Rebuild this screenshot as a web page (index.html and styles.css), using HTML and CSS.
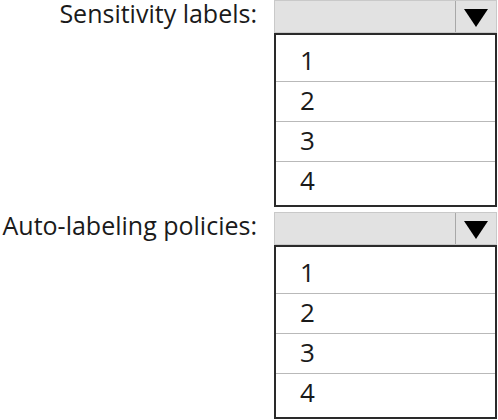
FILE: index.html
```html
<!DOCTYPE html>
<html>
<head>
<meta charset="utf-8">
<link rel="stylesheet" href="styles.css">
</head>
<body>
<div class="form">
  <div class="label">Sensitivity labels:</div>
  <div class="field">
    <div class="combo">
      <div class="combo-value"></div>
      <div class="combo-btn">
        <svg width="24" height="18" viewBox="0 0 24 18"><polygon points="0,0 24,0 12,18" fill="#000"/></svg>
      </div>
    </div>
    <ul class="list">
      <li>1</li>
      <li>2</li>
      <li>3</li>
      <li>4</li>
    </ul>
  </div>

  <div class="label">Auto-labeling policies:</div>
  <div class="field">
    <div class="combo">
      <div class="combo-value"></div>
      <div class="combo-btn">
        <svg width="24" height="18" viewBox="0 0 24 18"><polygon points="0,0 24,0 12,18" fill="#000"/></svg>
      </div>
    </div>
    <ul class="list">
      <li>1</li>
      <li>2</li>
      <li>3</li>
      <li>4</li>
    </ul>
  </div>
</div>
</body>
</html>
```

FILE: styles.css
```css
html, body {
  margin: 0;
  padding: 0;
  background: #ffffff;
}

body {
  font-family: "Open Sans", "Noto Sans", sans-serif;
  color: #1a1a1a;
}

.form {
  display: grid;
  grid-template-columns: 257px 223px;
  column-gap: 17px;
  row-gap: 5px;
  align-items: start;
}

.label {
  text-align: right;
  font-size: 25px;
  line-height: 26px;
  height: 33px;
  white-space: nowrap;
}

.field {
  display: flex;
  flex-direction: column;
}

.combo {
  height: 33px;
  box-sizing: border-box;
  display: flex;
  background: #e2e2e2;
  border: 1px solid #c9c9c9;
}

.combo-value {
  flex: 1;
}

.combo-btn {
  width: 41px;
  border-left: 1px solid #a8a8a8;
  display: flex;
  justify-content: center;
  padding-top: 8px;
  box-sizing: border-box;
}

.combo-btn svg {
  display: block;
}

.list {
  list-style: none;
  margin: 0;
  padding: 7px 0 3px 0;
  border: 2px solid #2a2a2a;
  height: 174px;
  box-sizing: border-box;
}

.list li {
  height: 40px;
  box-sizing: border-box;
  border-bottom: 1px solid #b9b9b9;
  padding-left: 24px;
  font-size: 26px;
  line-height: 37px;
}

.list li:last-child {
  border-bottom: none;
}
```
